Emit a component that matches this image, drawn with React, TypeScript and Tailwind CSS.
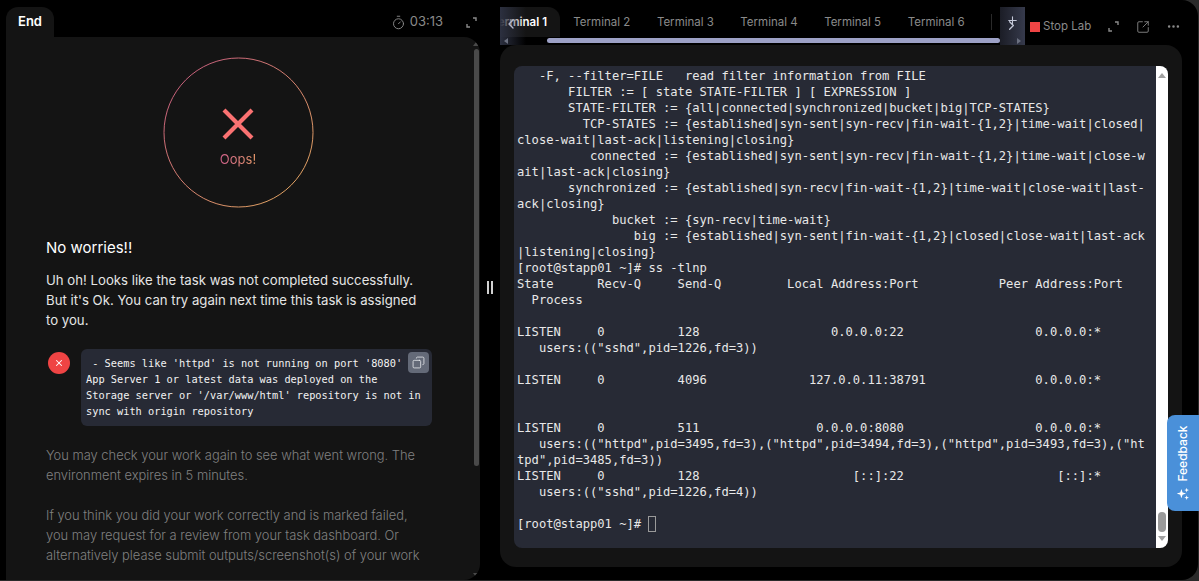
import { Timer, Copy, X, SquareArrowOutUpRight, Ellipsis, ChevronLeft, ChevronRight, Plus } from "lucide-react";

const terminalLines = [
  "   -F, --filter=FILE   read filter information from FILE",
  "       FILTER := [ state STATE-FILTER ] [ EXPRESSION ]",
  "       STATE-FILTER := {all|connected|synchronized|bucket|big|TCP-STATES}",
  "         TCP-STATES := {established|syn-sent|syn-recv|fin-wait-{1,2}|time-wait|closed|",
  "close-wait|last-ack|listening|closing}",
  "          connected := {established|syn-sent|syn-recv|fin-wait-{1,2}|time-wait|close-w",
  "ait|last-ack|closing}",
  "       synchronized := {established|syn-recv|fin-wait-{1,2}|time-wait|close-wait|last-",
  "ack|closing}",
  "             bucket := {syn-recv|time-wait}",
  "                big := {established|syn-sent|fin-wait-{1,2}|closed|close-wait|last-ack",
  "|listening|closing}",
  "[root@stapp01 ~]# ss -tlnp",
  "State      Recv-Q     Send-Q         Local Address:Port           Peer Address:Port",
  "  Process",
  "",
  "LISTEN     0          128                  0.0.0.0:22                  0.0.0.0:*",
  '   users:(("sshd",pid=1226,fd=3))',
  "",
  "LISTEN     0          4096              127.0.0.11:38791               0.0.0.0:*",
  "",
  "",
  "LISTEN     0          511                0.0.0.0:8080                  0.0.0.0:*",
  '   users:(("httpd",pid=3495,fd=3),("httpd",pid=3494,fd=3),("httpd",pid=3493,fd=3),("ht',
  'tpd",pid=3485,fd=3))',
  "LISTEN     0          128                     [::]:22                     [::]:*",
  '   users:(("sshd",pid=1226,fd=4))',
  "",
];

const tabs = ["Terminal 2", "Terminal 3", "Terminal 4", "Terminal 5", "Terminal 6"];

const CornersIcon = () => (
  <svg width="11" height="11" viewBox="0 0 11 11" fill="none" stroke="currentColor" strokeWidth="1.4">
    <path d="M7 1h3v3M1 7v3h3" />
  </svg>
);

const EndPanel = () => (
  <div className="flex w-[474px] shrink-0 flex-col">
    <div className="flex h-[37px] items-end">
      <div className="flex h-[30px] w-[48px] items-center justify-center rounded-t-xl bg-[#141414] text-[13px] font-semibold text-white">
        End
      </div>
      <div className="flex h-[30px] flex-1 items-center justify-end gap-[4px] pr-[3px] text-[#8a8a8a]">
        <Timer size={15} strokeWidth={1.5} />
        <span className="text-[13px]">03:13</span>
        <span className="ml-[19px]"><CornersIcon /></span>
      </div>
    </div>
    <div className="relative flex-1 overflow-hidden rounded-r-2xl bg-[#141414] pl-[40px] pr-[50px]">
      <div className="mx-auto mt-[20px] flex h-[151px] w-[151px] items-center justify-center">
        <div className="relative flex h-[151px] w-[151px] flex-col items-center pt-[51px]">
          <svg width="151" height="151" viewBox="0 0 151 151" fill="none" className="absolute inset-0">
            <defs>
              <linearGradient id="ring" x1="0" y1="0" x2="1" y2="1">
                <stop offset="0%" stopColor="#c2547f" />
                <stop offset="100%" stopColor="#e5ad5e" />
              </linearGradient>
            </defs>
            <circle cx="75.5" cy="75.5" r="74.5" stroke="url(#ring)" strokeWidth="1" />
          </svg>
          <svg width="32" height="32" viewBox="0 0 32 32" stroke="#fb7272" strokeWidth="4.2">
            <path d="M2 2l28 28M30 2L2 30" />
          </svg>
          <span className="mt-[9px] bg-gradient-to-r from-[#d0608a] to-[#e99a6a] bg-clip-text text-[13px] leading-[20px] text-transparent">
            Oops!
          </span>
        </div>
      </div>
      <h2 className="mt-[30px] text-[15px] font-normal leading-[20px] text-white">No worries!!</h2>
      <p className="mt-[12px] w-[378px] text-[13.2px] leading-[20px] text-[#e5e5e5]">
        Uh oh! Looks like the task was not completed successfully. But it's Ok. You can try again next time this task is assigned to you.
      </p>
      <div className="mt-[19px] flex gap-[11px] pl-[2px]">
        <div className="mt-[3px] flex h-[22px] w-[22px] shrink-0 items-center justify-center rounded-full bg-[#ef4444] text-white">
          <X size={10} strokeWidth={2.5} />
        </div>
        <div className="relative h-[77px] w-[351px] shrink-0 rounded-md bg-[#272a35] px-[5px] py-[6px]">
          <pre className="font-['DejaVu_Sans_Mono',monospace] text-[10.3px] leading-[16px] text-[#f2f2f2]">
            {" - Seems like 'httpd' is not running on port '8080'\nApp Server 1 or latest data was deployed on the\nStorage server or '/var/www/html' repository is not in\nsync with origin repository"}
          </pre>
          <button className="absolute right-[3px] top-[3px] flex h-[21px] w-[21px] items-center justify-center rounded-sm bg-[#646a78] text-[#e5e7eb]">
            <Copy size={13} strokeWidth={1.5} className="-scale-x-100" />
          </button>
        </div>
      </div>
      <p className="mt-[20px] text-[12.9px] font-light leading-[20px] text-[#808080]">
        You may check your work again to see what went wrong. The environment expires in 5 minutes.
      </p>
      <p className="mt-[20px] text-[12.9px] font-light leading-[20px] text-[#808080]">
        If you think you did your work correctly and is marked failed, you may request for a review from your task dashboard. Or alternatively please submit outputs/screenshot(s) of your work
      </p>
      {/* scrollbar */}
      <div className="absolute bottom-0 right-[1px] top-0 flex w-[6px] flex-col items-center">
        <div className="mt-[5px] h-0 w-0 border-x-[3px] border-b-[4px] border-x-transparent border-b-[#4a4a4a]" />
        <div className="mt-[3px] h-[417px] w-[5px] rounded-full bg-[#4a4a4a]" />
        <div className="mt-auto mb-[3px] h-0 w-0 border-x-[3px] border-t-[4px] border-x-transparent border-t-[#4a4a4a]" />
      </div>
    </div>
  </div>
);

const TabStrip = () => (
  <div className="relative h-[45px] w-[525px] shrink-0 overflow-hidden">
    <div className="mt-[7px] flex h-[30px] -ml-[24px] items-center text-[11.5px] text-[#8a8a8a]">
      <div className="flex h-[30px] w-[84px] shrink-0 items-center justify-end rounded-t-xl bg-[#141414] pr-[13px] pt-px font-semibold text-white">
        Terminal 1
      </div>
      {tabs.map((tab) => (
        <div key={tab} className="flex w-[83.6px] shrink-0 justify-center whitespace-nowrap pt-px">{tab}</div>
      ))}
      <div className="ml-[13px] h-[16px] w-px shrink-0 bg-[#2a2a2a]" />
    </div>
    <div className="absolute left-[47px] top-[38px] h-[5px] w-[453px] rounded-full bg-[#9da1c6]" />
    <div className="absolute left-0 top-[7px] h-[38px] w-[26px] bg-gradient-to-r from-[#2c3040] to-transparent text-[#b4b8cc]">
      <ChevronLeft size={16} className="absolute left-[3px] top-[9px]" />
      <div className="absolute left-[4px] top-[31px] h-0 w-0 border-y-[3px] border-r-[4px] border-y-transparent border-r-[#6b7080]" />
    </div>
    <div className="absolute right-0 top-[7px] h-[38px] w-[25px] bg-gradient-to-r from-[#1b1d26] to-[#363a4c] text-[#c4c8d8]">
      <Plus size={13} className="absolute left-[6px] top-[7px]" />
      <ChevronRight size={15} className="absolute left-[4px] top-[11px]" />
      <div className="absolute right-[4px] top-[31px] h-0 w-0 border-y-[3px] border-l-[4px] border-y-transparent border-l-[#6b7080]" />
    </div>
  </div>
);

const TerminalPanel = () => (
  <div className="relative mt-[20px] ml-[14px] h-[482px] w-[654px] overflow-hidden rounded-lg bg-[#272a35]">
    <pre className="px-[3px] pt-[2px] font-['DejaVu_Sans_Mono',monospace] text-[12.13px] leading-[16px] text-[#e8e8e8]">
      {terminalLines.join("\n")}
      {"\n[root@stapp01 ~]# "}
      <span className="inline-block h-[16px] w-[8px] border border-[#9a9a9a] align-top" />
    </pre>
    <div className="absolute bottom-0 right-0 top-0 flex w-[12px] flex-col items-center bg-white">
      <div className="mt-[7px] h-0 w-0 border-x-[4px] border-b-[5px] border-x-transparent border-b-[#a0a0a0]" />
      <div className="mt-auto h-[20px] w-[8px] rounded-full bg-[#9a9a9a]" />
      <div className="mt-[4px] mb-[7px] h-0 w-0 border-x-[4px] border-t-[5px] border-x-transparent border-t-[#a0a0a0]" />
    </div>
  </div>
);

const App = () => {
  return (
    <div className="relative h-[581px] w-[1199px] overflow-hidden bg-[#2a2a2a] font-['Inter',sans-serif]">
      <div className="flex h-[580px] w-[1198px] rounded-r-2xl bg-black pl-[6px]">
        <EndPanel />
        {/* drag handle */}
        <div className="flex w-[20px] shrink-0 items-center justify-center gap-[2px]">
          <div className="mb-[5px] h-[13px] w-[2px] bg-[#d0d0d0]" />
          <div className="mb-[5px] h-[13px] w-[2px] bg-[#d0d0d0]" />
        </div>
        <div className="flex w-[682px] shrink-0 flex-col">
          <div className="flex h-[45px] shrink-0">
            <TabStrip />
            <div className="flex flex-1 items-center pl-[5px] pt-[8px] text-[#8a8a8a]">
              <div className="h-[10px] w-[10px] shrink-0 bg-[#ef4444]" />
              <span className="ml-[3px] whitespace-nowrap text-[11.5px]">Stop Lab</span>
              <span className="ml-[17px]"><CornersIcon /></span>
              <SquareArrowOutUpRight size={14} strokeWidth={1.5} className="ml-[17px] shrink-0" />
              <Ellipsis size={15} className="ml-[16px] shrink-0" />
            </div>
          </div>
          <div className="h-[522px] w-[682px] shrink-0 rounded-2xl bg-[#141414] pt-px">
            <TerminalPanel />
          </div>
        </div>
      </div>
      <button className="absolute right-0 top-[415px] flex h-[96px] w-[32px] items-center justify-center rounded-l-lg bg-[#4a90d9] text-white">
        <span className="flex -rotate-90 items-center gap-[5px] whitespace-nowrap text-[12px] font-medium">
          <svg width="14" height="14" viewBox="0 0 24 24" fill="currentColor" className="rotate-90">
            <path d="M10 4l2 6 6 2-6 2-2 6-2-6-6-2 6-2zM19 2l1 3 3 1-3 1-1 3-1-3-3-1 3-1zM19 15l1 3 3 1-3 1-1 3-1-3-3-1 3-1z" />
          </svg>
          Feedback
        </span>
      </button>
    </div>
  );
};

export default App;
